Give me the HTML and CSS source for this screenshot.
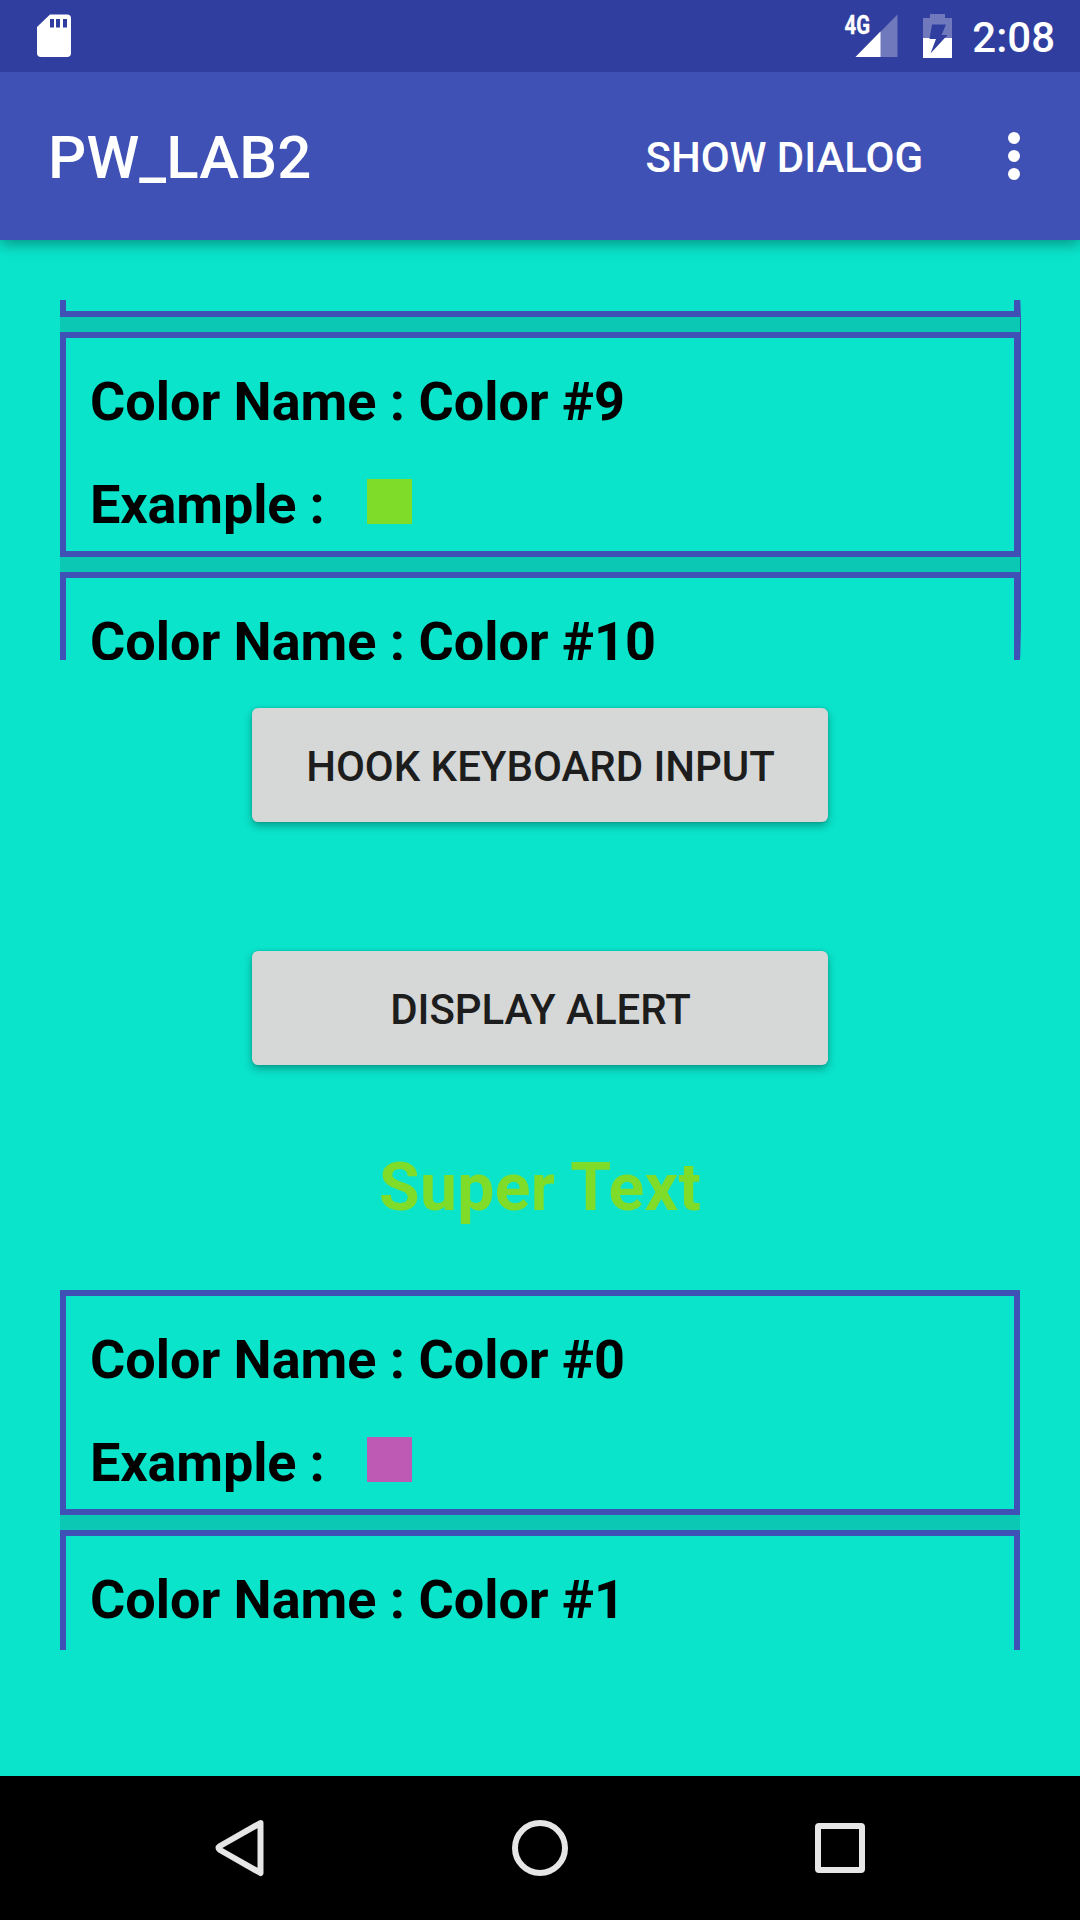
FILE: index.html
```html
<!DOCTYPE html>
<html lang="en">
<head>
<meta charset="utf-8">
<title>PW_LAB2</title>
<link rel="stylesheet" href="styles.css">
</head>
<body>
<div class="screen">
  <header class="status-bar">
    <svg class="sd-icon" width="34" height="43" viewBox="0 0 34 43">
      <path fill="#fff" d="M13 .5H30q4 0 4 4V39q0 4-4 4H4q-4 0-4-4V13z"/>
      <path fill="#303f9f" d="M13 5h4v8.500h-4zM19 5h4v8.500h-4zM26 5h4v8.500h-4z"/>
    </svg>
    <div class="status-icons">
      <svg class="signal-icon" width="54" height="44" viewBox="0 0 54 44">
        <path fill="#7079bc" d="M53.500.500V43H11.500z"/>
        <path fill="#fff" d="M36.500 17.500V43H11.500z"/>
        <text class="network" x="0.500" y="19.500" textLength="25.500" lengthAdjust="spacingAndGlyphs">4G</text>
      </svg>
      <svg class="battery-icon" width="29" height="44" viewBox="0 0 29 44">
        <path fill="#7079bc" d="M7 0h15v4h7v20H0V4h7z"/>
        <path fill="#fff" d="M0 24h29v20H0z"/>
        <path fill="#303f9f" d="M9 10.500h14L18.500 21h6L7.500 39.500 13 25H6.500z"/>
      </svg>
      <span class="clock">2:08</span>
    </div>
  </header>
  <nav class="app-bar">
    <h1 class="title">PW_LAB2</h1>
    <span class="action">SHOW DIALOG</span>
    <svg class="more-icon" width="12" height="48" viewBox="0 0 12 48" fill="#fff">
      <circle cx="6" cy="6" r="6"/><circle cx="6" cy="24" r="6"/><circle cx="6" cy="42" r="6"/>
    </svg>
  </nav>
  <main class="content">
    <section class="list list-scrolled">
      <article class="card"></article>
      <article class="card">
        <p class="name">Color Name : Color #9</p>
        <p class="example">Example :<span class="swatch green"></span></p>
      </article>
      <article class="card">
        <p class="name">Color Name : Color #10</p>
      </article>
      <div class="scrollbar"></div>
    </section>
    <button class="button hook">HOOK KEYBOARD INPUT</button>
    <button class="button alert">DISPLAY ALERT</button>
    <p class="super-text">Super Text</p>
    <section class="list">
      <article class="card">
        <p class="name">Color Name : Color #0</p>
        <p class="example">Example :<span class="swatch pink"></span></p>
      </article>
      <article class="card">
        <p class="name">Color Name : Color #1</p>
      </article>
    </section>
  </main>
  <footer class="nav-bar">
    <svg width="56" height="60" viewBox="0 0 56 60"><path d="M8 28Q5 30 8 32L48.500 55V5z"/></svg>
    <svg width="56" height="60" viewBox="0 0 56 60"><circle cx="28" cy="30" r="25"/></svg>
    <svg width="56" height="60" viewBox="0 0 56 60"><rect x="6" y="8" width="44" height="44" rx="1"/></svg>
  </footer>
</div>
</body>
</html>
```
FILE: styles.css
```css
* { box-sizing: border-box; }
body { margin: 0; }
h1, p { margin: 0; }

.screen {
  width: 1080px;
  height: 1920px;
  display: flex;
  flex-direction: column;
  overflow: hidden;
  background: #0ae4cb;
  font-family: Roboto, sans-serif;
}

.status-bar {
  position: relative;
  z-index: 1;
  height: 72px;
  padding: 14px 25px 0 37px;
  display: flex;
  justify-content: space-between;
  align-items: flex-start;
  background: #303f9f;
}
.status-icons { display: flex; align-items: flex-start; }
.signal-icon { overflow: visible; }
.network { font-size: 26px; font-weight: 700; fill: #fff; stroke: #fff; stroke-width: .4px; }
.battery-icon { margin-left: 25px; }
.clock {
  margin: -1px 0 0 20px;
  font-size: 42px;
  font-weight: 500;
  line-height: 49px;
  color: #fff;
}

.app-bar {
  position: relative;
  height: 168px;
  padding: 0 60px 0 48px;
  display: flex;
  align-items: center;
  background: #3f51b5;
  color: #fff;
  box-shadow: 0 4px 14px rgba(0, 0, 0, .36);
}
.title { flex: 1; font-size: 60px; font-weight: 500; line-height: 70px; padding-top: 4px; letter-spacing: .1px; }
.action { font-size: 42px; font-weight: 500; line-height: 50px; padding-top: 4px; letter-spacing: -.05px; }
.more-icon { margin-left: 85px; }

.content {
  height: 1536px;
  padding: 60px 60px 0;
  display: flex;
  flex-direction: column;
  align-items: center;
}

.list {
  position: relative;
  flex: none;
  width: 960px;
  height: 360px;
  display: flex;
  flex-direction: column;
  gap: 15px;
  background: #0ac8b3;
  clip-path: inset(0 -1px 0 0);
}
.list-scrolled .card:first-child { height: 17px; border-top: 0; padding: 0; }
.card {
  flex: none;
  height: 225px;
  padding: 32px 24px 0;
  border: 6px solid #3f51b5;
  background: #0ae4cb;
  font-size: 54px;
  font-weight: 700;
  line-height: 63px;
  letter-spacing: -.03px;
  color: #000;
}
.example { margin-top: 40px; display: flex; align-items: flex-start; letter-spacing: -.15px; }
.swatch { width: 45px; height: 45px; margin: 6px 0 0 42px; }
.green { background: #7fdc28; }
.pink { background: #be5ab4; }
.scrollbar {
  position: absolute;
  right: -1px;
  top: 0;
  width: 1px;
  height: 358px;
  background: linear-gradient(rgba(63, 81, 181, .3), #3f51b5 18px, #3f51b5 328px, rgba(63, 81, 181, .2));
}

.button {
  width: 576px;
  height: 114px;
  padding: 4px 0 0 1px;
  border: 0;
  border-radius: 6px;
  background: #d6d8d7;
  color: #1d1d1d;
  font: 500 42px/50px Roboto, sans-serif;
  letter-spacing: -.03px;
  box-shadow: 0 4px 8px rgba(0, 0, 0, .3), 0 0 3px rgba(0, 0, 0, .15);
}
.hook { margin-top: 48px; }
.alert { margin-top: 129px; }
.super-text {
  margin: 84px 0 64px;
  font-size: 66px;
  font-weight: 700;
  line-height: 77px;
  letter-spacing: .35px;
  color: #7fdc28;
}

.nav-bar {
  height: 144px;
  display: flex;
  align-items: center;
  justify-content: center;
  gap: 244px;
  background: #000;
}
.nav-bar svg { fill: none; stroke: #e6e6e6; stroke-width: 6; stroke-linejoin: round; }
```
